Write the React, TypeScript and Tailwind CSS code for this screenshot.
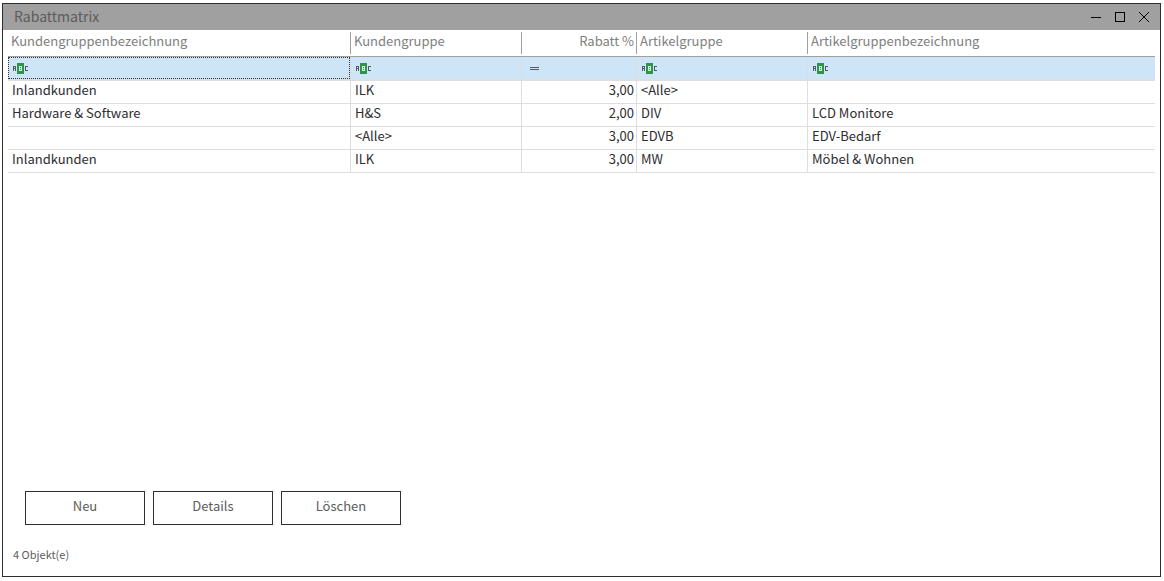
import React from 'react';

interface Column {
  key: string;
  label: string;
  width: string;
  filter: 'text' | 'equals';
}

interface DiscountRow {
  customerName: string;
  customer: string;
  discount: string;
  article: string;
  articleName: string;
}

const columns: Column[] = [
  { key: 'customerName', label: 'Kundengruppenbezeichnung', width: 'w-[343px]', filter: 'text' },
  { key: 'customer', label: 'Kundengruppe', width: 'w-[171px]', filter: 'text' },
  { key: 'discount', label: 'Rabatt %', width: 'w-[115px]', filter: 'equals' },
  { key: 'article', label: 'Artikelgruppe', width: 'w-[171px]', filter: 'text' },
  { key: 'articleName', label: 'Artikelgruppenbezeichnung', width: 'w-auto', filter: 'text' },
];

const rows: DiscountRow[] = [
  { customerName: 'Inlandkunden', customer: 'ILK', discount: '3,00', article: '<Alle>', articleName: '' },
  { customerName: 'Hardware & Software', customer: 'H&S', discount: '2,00', article: 'DIV', articleName: 'LCD Monitore' },
  { customerName: '', customer: '<Alle>', discount: '3,00', article: 'EDVB', articleName: 'EDV-Bedarf' },
  { customerName: 'Inlandkunden', customer: 'ILK', discount: '3,00', article: 'MW', articleName: 'Möbel & Wohnen' },
];

const TextFilterIcon = () => (
  <svg width="16" height="11" viewBox="0 0 16 11" shapeRendering="crispEdges" aria-hidden="true">
    <path d="M0 3h3v5h-1v-2h-1v2h-1zM1 4v1h1v-1z" fill="#555a60" fillRule="evenodd" />
    <rect x="4" width="7" height="11" fill="#2f9447" />
    <path d="M6 3h3v5h-3zM7 4v1h1v-1zM7 6v1h1v-1z" fill="#d5eef0" fillRule="evenodd" />
    <path d="M12 3h3v1h-2v3h2v1h-3z" fill="#555a60" />
  </svg>
);

const EqualsIcon = () => (
  <svg width="9" height="11" viewBox="0 0 9 11" shapeRendering="crispEdges" aria-hidden="true">
    <path d="M0 4h9v1h-9zM0 6h9v1h-9z" fill="#555a60" />
  </svg>
);

const TitleBar = () => (
  <header className="flex h-[26px] shrink-0 items-center justify-between bg-[#a0a0a0] px-[11px]">
    <h1 className="pb-[2px] text-[14px] leading-5 text-[#5c5c5c]">Rabattmatrix</h1>
    <div className="flex gap-[14px] text-black">
      <button type="button" aria-label="Minimieren">
        <svg width="10" height="10" viewBox="0 0 10 10" shapeRendering="crispEdges">
          <rect y="5" width="10" height="1" fill="currentColor" />
        </svg>
      </button>
      <button type="button" aria-label="Maximieren">
        <svg width="10" height="10" viewBox="0 0 10 10" shapeRendering="crispEdges">
          <path d="M0 0h10v10h-10zM1 1v8h8v-8z" fill="currentColor" fillRule="evenodd" />
        </svg>
      </button>
      <button type="button" aria-label="Schließen">
        <svg width="10" height="10" viewBox="0 0 10 10">
          <path d="M0 0L10 10M10 0L0 10" stroke="currentColor" />
        </svg>
      </button>
    </div>
  </header>
);

const FilterCell: React.FC<{ column: Column; active: boolean; last: boolean }> = ({ column, active, last }) => (
  <td className={`border-b-2 border-[#dedede] bg-[#cde5f7] p-0 ${last ? '' : 'border-r border-r-[#d8dee3]'}`}>
    <div
      className={`flex h-[22px] items-center border border-dotted ${active ? 'border-[#333]' : 'border-transparent'} ${
        column.filter === 'equals' ? 'pl-[7px]' : 'pl-1'
      }`}
    >
      <button type="button" aria-label={`Filterart ${column.label}`}>
        {column.filter === 'equals' ? <EqualsIcon /> : <TextFilterIcon />}
      </button>
      <input
        type="text"
        aria-label={`Filter ${column.label}`}
        className="h-5 min-w-0 flex-1 bg-transparent px-1 outline-none"
      />
    </div>
  </td>
);

const DiscountTable = () => (
  <table className="w-full table-fixed border-separate border-spacing-0 text-[13px] leading-[18px]">
    <thead>
      <tr>
        {columns.map((column, i) => (
          <th
            key={column.key}
            className={`border-b border-[#a0a0a0] px-0 py-[2px] font-normal text-[#808080] ${column.width}`}
          >
            <div
              className={`h-[22px] truncate ${column.key === 'discount' ? 'pr-[2px] text-right' : 'pl-[3px] text-left'} ${
                i < columns.length - 1 ? 'border-r border-[#a0a0a0]' : ''
              }`}
            >
              {column.label}
            </div>
          </th>
        ))}
      </tr>
    </thead>
    <tbody className="text-[#2d2d30]">
      <tr>
        {columns.map((column, i) => (
          <FilterCell key={column.key} column={column} active={i === 0} last={i === columns.length - 1} />
        ))}
      </tr>
      {rows.map((row, i) => (
        <tr key={i}>
          <td className="h-[23px] border-r border-b border-[#dedede] p-0 pb-1 pl-1">{row.customerName}</td>
          <td className="border-r border-b border-[#dedede] p-0 pb-1 pl-1">{row.customer}</td>
          <td className="border-r border-b border-[#dedede] p-0 pr-[2px] pb-1 text-right">{row.discount}</td>
          <td className="border-r border-b border-[#dedede] p-0 pb-1 pl-1">{row.article}</td>
          <td className="border-b border-[#dedede] p-0 pb-1 pl-1">{row.articleName}</td>
        </tr>
      ))}
    </tbody>
  </table>
);

const ActionButton: React.FC<{ text: string }> = ({ text }) => (
  <button type="button" className="h-[34px] w-[120px] border border-[#2d2d30] pb-1 text-[13px] leading-[18px] text-[#5c5c5c]">
    {text}
  </button>
);

const App = () => {
  return (
    <div className="h-screen bg-white pt-[3px] pr-[3px] pb-1 pl-[2px] font-['Noto_Sans_CJK_SC',sans-serif]">
      <div className="flex h-full flex-col border border-[#2d2d30]">
        <TitleBar />

        <main className="flex-1 px-[5px]">
          <DiscountTable />
        </main>

        <div className="flex gap-2 px-[22px]">
          <ActionButton text="Neu" />
          <ActionButton text="Details" />
          <ActionButton text="Löschen" />
        </div>

        <footer className="px-[10px] pt-5 pb-[13px] text-[11px] leading-[18px] text-[#5c5c5c]">
          {rows.length} Objekt(e)
        </footer>
      </div>
    </div>
  );
};

export default App;
